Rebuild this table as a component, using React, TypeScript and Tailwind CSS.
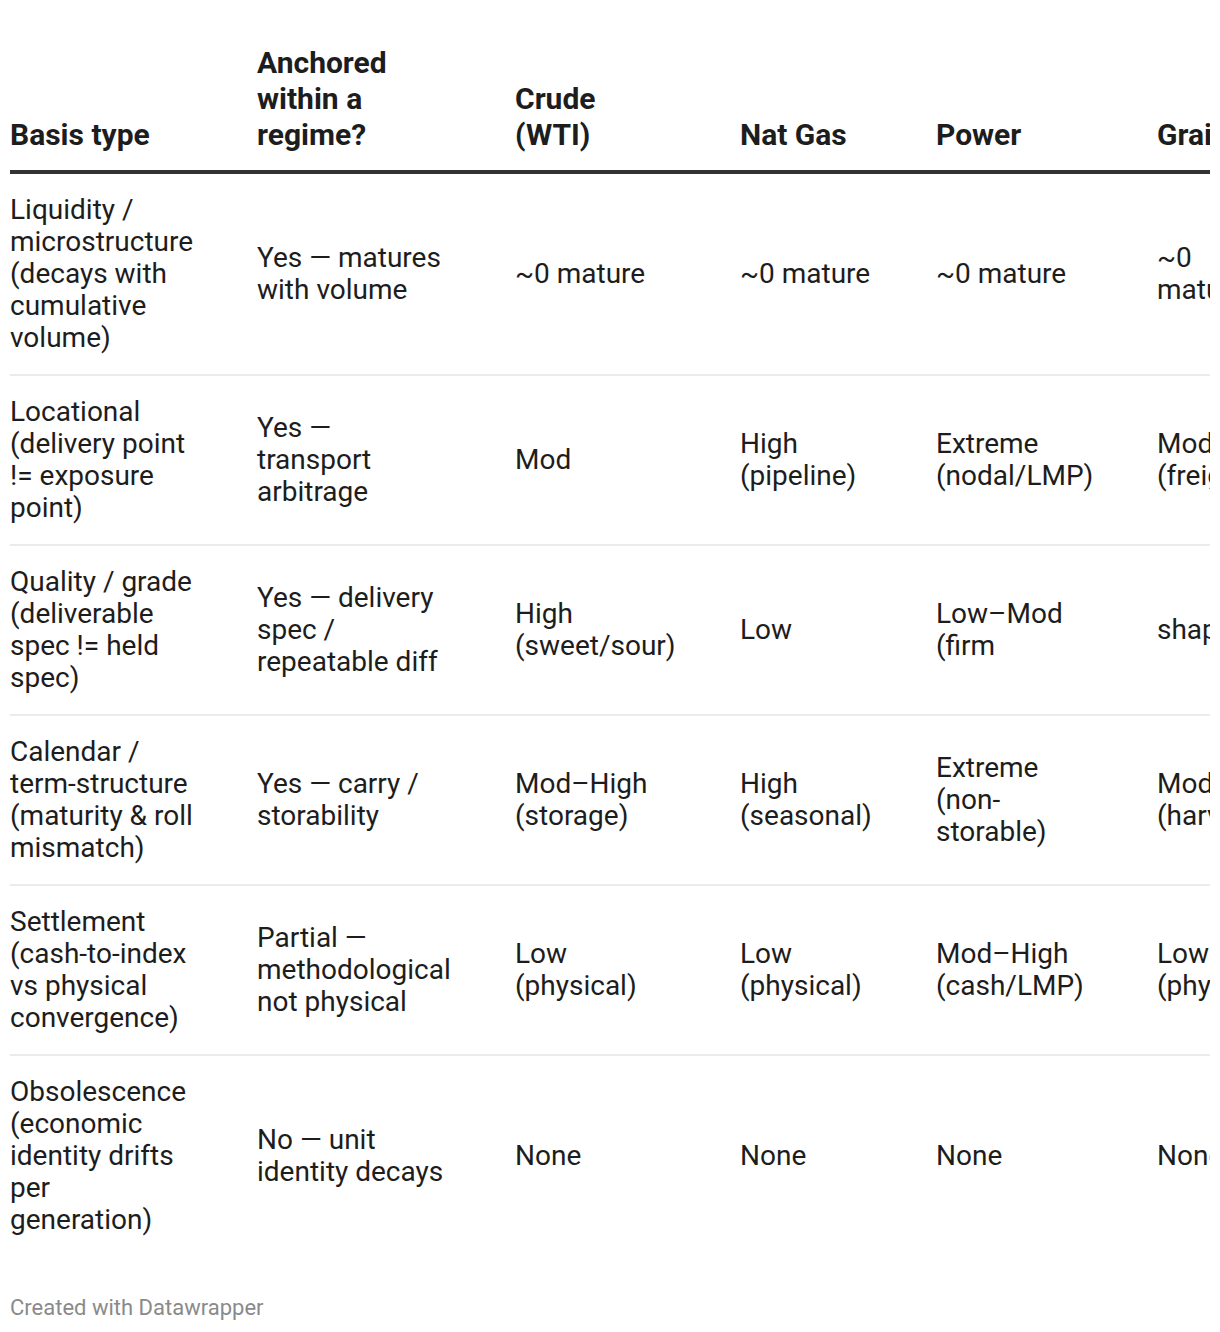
const headers = [
  "Basis type",
  "Anchored\nwithin a\nregime?",
  "Crude\n(WTI)",
  "Nat Gas",
  "Power",
  "Grains",
];

// line breaks follow the reference wrapping
const rows: string[][] = [
  [
    "Liquidity /\nmicrostructure\n(decays with\ncumulative\nvolume)",
    "Yes — matures\nwith volume",
    "~0 mature",
    "~0 mature",
    "~0 mature",
    "~0\nmature",
  ],
  [
    "Locational\n(delivery point\n!= exposure\npoint)",
    "Yes —\ntransport\narbitrage",
    "Mod",
    "High\n(pipeline)",
    "Extreme\n(nodal/LMP)",
    "Mod\n(freight)",
  ],
  [
    "Quality / grade\n(deliverable\nspec != held\nspec)",
    "Yes — delivery\nspec /\nrepeatable diff",
    "High\n(sweet/sour)",
    "Low",
    "Low–Mod\n(firm",
    "shape",
  ],
  [
    "Calendar /\nterm-structure\n(maturity & roll\nmismatch)",
    "Yes — carry /\nstorability",
    "Mod–High\n(storage)",
    "High\n(seasonal)",
    "Extreme\n(non-\nstorable)",
    "Mod\n(harvest)",
  ],
  [
    "Settlement\n(cash-to-index\nvs physical\nconvergence)",
    "Partial —\nmethodological\nnot physical",
    "Low\n(physical)",
    "Low\n(physical)",
    "Mod–High\n(cash/LMP)",
    "Low\n(physical)",
  ],
  [
    "Obsolescence\n(economic\nidentity drifts\nper\ngeneration)",
    "No — unit\nidentity decays",
    "None",
    "None",
    "None",
    "None",
  ],
];

const widths = ["w-[247px]", "w-[258px]", "w-[225px]", "w-[196px]", "w-[221px]", "w-[180px]"];

export default function App() {
  return (
    <div className="bg-white px-[10px] pt-[45px] pb-[10px] font-['Roboto',sans-serif] text-[#1d1d1d]">
      <div className="overflow-hidden">
        <table className="w-[1327px] table-fixed border-separate border-spacing-0 text-left">
          <colgroup>
            {widths.map((w, i) => (
              <col key={i} className={w} />
            ))}
          </colgroup>
          <thead>
            <tr>
              {headers.map((h) => (
                <th
                  key={h}
                  className="whitespace-pre-line border-b-4 border-[#333333] pb-[17px] pr-2 align-bottom text-[30px] font-bold leading-[36px]"
                >
                  {h}
                </th>
              ))}
            </tr>
          </thead>
          <tbody>
            {rows.map((row, r) => (
              <tr key={r}>
                {row.map((cell, c) => (
                  <td
                    key={c}
                    className={`whitespace-pre-line py-5 pr-2 align-middle text-[28px] leading-[32px] ${
                      r < rows.length - 1 ? "border-b-2 border-[#ebebeb]" : ""
                    }`}
                  >
                    {cell}
                  </td>
                ))}
              </tr>
            ))}
          </tbody>
        </table>
      </div>
      <p className="mt-[40px] text-[22px] leading-[24px] text-[#8a8a8a]">
        Created with Datawrapper
      </p>
    </div>
  );
}
